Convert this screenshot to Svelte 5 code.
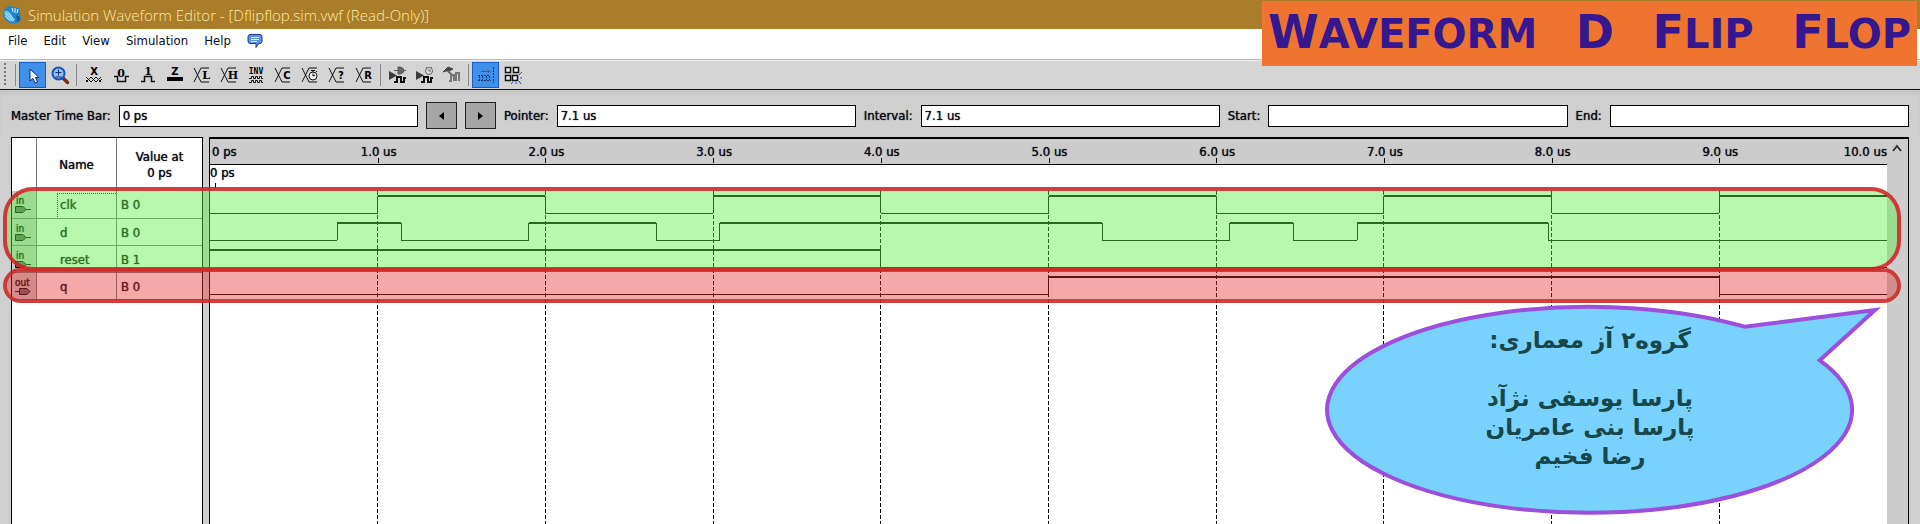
<script>
  const menus = ['File', 'Edit', 'View', 'Simulation', 'Help'];

  const tools = [
    { id: 'pointer', label: 'Selection tool', active: true },
    { id: 'zoom', label: 'Zoom tool' },
    { id: 'sep' },
    { id: 'unknown', label: 'Forcing unknown' },
    { id: 'low', label: 'Forcing low' },
    { id: 'high', label: 'Forcing high' },
    { id: 'highz', label: 'High impedance' },
    { id: 'box', letter: 'L', label: 'Weak low' },
    { id: 'box', letter: 'H', label: 'Weak high' },
    { id: 'invert', label: 'Invert' },
    { id: 'box', letter: 'C', sans: true, label: 'Count value' },
    { id: 'clock', label: 'Overwrite clock' },
    { id: 'box', letter: '?', sans: true, label: 'Arbitrary value' },
    { id: 'box', letter: 'R', sans: true, label: 'Random values' },
    { id: 'sep' },
    { id: 'runfunc', label: 'Run functional simulation' },
    { id: 'runtime', label: 'Run timing simulation' },
    { id: 'testbench', label: 'Generate testbench' },
    { id: 'sep' },
    { id: 'snapgrid', label: 'Snap to grid', active: true },
    { id: 'snaptrans', label: 'Snap to transition' }
  ];

  const signals = [
    { name: 'clk', dir: 'in', value: 'B 0', start: 0, edges: [1, 2, 3, 4, 5, 6, 7, 8, 9] },
    { name: 'd', dir: 'in', value: 'B 0', start: 0, edges: [0.76, 1.14, 1.9, 2.66, 3.04, 5.32, 6.08, 6.46, 6.84, 7.98] },
    { name: 'reset', dir: 'in', value: 'B 1', start: 1, edges: [4] },
    { name: 'q', dir: 'out', value: 'B 0', start: 0, edges: [5, 9] }
  ];

  const ROW = 27;
  const FIRST = 26;
  const span = 10;
  const marks = [1, 2, 3, 4, 5, 6, 7, 8, 9];

  function segments(signal, row) {
    const high = FIRST + row * ROW + 5;
    const low = high + 17;
    const out = [];
    let level = signal.start;
    let from = 0;
    for (const edge of [...signal.edges, span]) {
      const y = level ? high : low;
      out.push({ x1: from, x2: edge, y1: y, y2: y, w: level ? 2 : 1 });
      if (edge < span) out.push({ x1: edge, x2: edge, y1: high, y2: low, w: 1 });
      level = 1 - level;
      from = edge;
    }
    return out;
  }

  const lines = signals.flatMap(segments);
  const pct = (t) => `${(t / span) * 100}%`;
</script>

<div class="window">
  <header class="titlebar">
    <svg width="20" height="20" viewBox="0 0 20 20" aria-hidden="true">
      <path d="M2 7Q4 2 9 1L18 3L20 14L17 18Q11 19 7 17Q2 13 2 7Z" fill="#1f86cc" />
      <path d="M3 7Q6 4 9 8L14 15L12 17Q4 15 3 7Z" fill="#6cc0ea" />
      <path d="M11 3l1 4M14 3v5M17 4l-1 4" stroke="#e4f6fc" fill="none" />
      <path d="M5 8l6 7M8 8l5 7M4 11l5 5" stroke="#b5e2f6" fill="none" />
      <path d="M15 10l4 2v3l-3 2Z" fill="#175a9a" />
    </svg>
    <h1>Simulation Waveform Editor - [Dflipflop.sim.vwf (Read-Only)]</h1>
  </header>

  <nav class="menubar">
    {#each menus as m}
      <button type="button">{m}</button>
    {/each}
    <button type="button" aria-label="Feedback">
      <svg width="16" height="16" viewBox="0 0 16 16">
        <path d="M3 1.500H13Q15 1.500 15 4V8Q15 10.500 13 10.500H12L9 14.500V10.500H3Q1 10.500 1 8V4Q1 1.500 3 1.500Z" fill="#5a92e6" stroke="#1f3f8f" />
        <path d="M4 4.500H12M4 6.500H12M4 8.500H10" stroke="#e4efff" />
      </svg>
    </button>
  </nav>

  <div class="toolbar" role="toolbar" aria-label="Waveform tools">
    <span class="grip"></span>
    <span class="sep"></span>
    {#each tools as t}
      {#if t.id === 'sep'}
        <span class="sep"></span>
      {:else}
        <button type="button" class:active={t.active} aria-label={t.label}>
          <svg width="24" height="24" viewBox="0 0 24 24" fill="none" stroke="#111">
            {#if t.id === 'pointer'}
              <path d="M9 6V18L12 15.500L14 20L16.500 19L14.500 14.500H18Z" fill="#eef4ff" stroke="#16305f" />
            {:else if t.id === 'zoom'}
              <path d="M15 15L19.500 19.500" stroke="#7a2d12" stroke-width="3.500" stroke-linecap="round" />
              <circle cx="10.500" cy="10.500" r="6" fill="#8fc0f5" stroke="#1d55b8" stroke-width="2" />
              <path d="M7.500 9.500H13.500M10.500 6.500V12.500M7.500 14H13.500" stroke="#12306f" />
            {:else if t.id === 'unknown'}
              <text x="12" y="12" class="wide">X</text>
              <path d="M4 19L9 14L14 19L19 14M4 14L9 19L14 14L19 19M6 19L4 17M17 19L20 16" />
            {:else if t.id === 'low'}
              <text x="12" y="14" class="serif">0</text>
              <path d="M5 13.500H8.500V18.500H16.500V13.500H20" stroke-width="1.500" />
            {:else if t.id === 'high'}
              <text x="12" y="12" class="serif">1</text>
              <path d="M5 18.500H8.500V13.500H15.500V18.500H19" stroke-width="1.500" />
            {:else if t.id === 'highz'}
              <text x="12" y="12" class="wide">Z</text>
              <rect x="4" y="14" width="16" height="4" fill="#000" stroke="none" />
            {:else if t.id === 'box'}
              <path d="M4 5L11 19H19M4 19L11 5H19" />
              <text x="16" y="16" class={t.sans ? 'wide' : 'serif'}>{t.letter}</text>
            {:else if t.id === 'invert'}
              <text x="12" y="11" class="mini">INV</text>
              <path d="M5 15.500H7.500V13.500H9.500V15.500H11.500V13.500H13.500V15.500H15.500V13.500H17.500V15.500H19M5 19.500H7.500V17.500H9.500V19.500H11.500V17.500H13.500V19.500H15.500V17.500H17.500V19.500H19" />
            {:else if t.id === 'clock'}
              <path d="M4 5L11 19H19M4 19L11 5H19" />
              <circle cx="15" cy="13" r="4" fill="#eee" />
              <path d="M15 7V9M13 7.500H17M15 13V10.500M15 13L17 12M18 8L19 9" />
            {:else if t.id === 'runfunc'}
              <path d="M3 8L11 12.500L3 17Z" fill="#3a3a3a" stroke="none" />
              <path d="M8 7.500H12M12 4V11H14Q18 10 18 7.500Q18 5 14 4ZM18 7.500H20" fill="#666" stroke="#555" />
              <path d="M8 19H11V14H15V19H18V15H20" stroke-width="2" />
            {:else if t.id === 'runtime'}
              <path d="M3 8L11 12.500L3 17Z" fill="#3a3a3a" stroke="none" />
              <circle cx="16" cy="8" r="3.500" fill="#ddd" stroke="#666" />
              <path d="M13 4L14 5M19 4L18 5M16 8V6M16 8H18" stroke="#666" />
              <path d="M8 19H11V14H15V19H18V15H20" stroke-width="2" />
            {:else if t.id === 'testbench'}
              <path d="M3 9L8 4L13 6L9 8L6 8Z" fill="#444" stroke="#444" />
              <path d="M8 8L13 13" stroke="#666" stroke-width="2" />
              <path d="M9 18H11V12H14V17H16V10H19V18" stroke="#777" stroke-width="2" />
            {:else if t.id === 'snapgrid'}
              <path d="M4 12.500H16M4 17.500H17M5.500 13V17M8.500 13V17M12.500 13V17M15.500 13V17" stroke="#17306e" stroke-dasharray="2 1" />
              <path d="M7 8.500H16M14 6.500L16 8.500L14 10.500" stroke="#8a3b6b" />
              <path d="M19.500 4V20" stroke="#17306e" stroke-dasharray="2 1" />
            {:else}
              <path d="M4.500 4.500H9.500V9.500H4.500ZM12.500 4.500H17.500V9.500H12.500ZM4.500 12.500H9.500V17.500H4.500ZM11.500 12.500H16.500V17.500H11.500Z" fill="#eee" stroke-width="1.500" />
              <path d="M18 12L21 9M19 15H21M18 18L20 21M15 19V21M12 19L10 21" stroke="#2a55a8" />
            {/if}
          </svg>
        </button>
      {/if}
    {/each}
  </div>

  <div class="timebar">
    <label for="master">Master Time Bar:</label>
    <input id="master" value="0 ps" />
    <button type="button" aria-label="Previous transition"><svg width="5" height="8" viewBox="0 0 5 8"><path d="M5 0V8L0 4Z" /></svg></button>
    <button type="button" aria-label="Next transition"><svg width="5" height="8" viewBox="0 0 5 8"><path d="M0 0V8L5 4Z" /></svg></button>
    <label for="ptr">Pointer:</label>
    <input id="ptr" value="7.1 us" />
    <label for="interval">Interval:</label>
    <input id="interval" value="7.1 us" />
    <label for="start">Start:</label>
    <input id="start" value="" />
    <label for="end">End:</label>
    <input id="end" value="" />
  </div>

  <main class="panes">
    <section class="signals">
      <table>
        <thead>
          <tr><th class="dir"></th><th class="name">Name</th><th>Value at<br />0 ps</th></tr>
        </thead>
        <tbody>
          {#each signals as s, i}
            <tr>
              <td class="dir">
                <svg width="20" height="22" viewBox="0 0 20 22">
                  {#if s.dir === 'in'}
                    <text x="2" y="10">in</text>
                    <path d="M1.500 12.500H9L12 15.500L9 18.500H1.500Z" fill="#666" stroke="#000" />
                    <path d="M12 15.500H17" stroke="#000" />
                  {:else}
                    <text x="1" y="10">out</text>
                    <path d="M5.500 12.500H13L16 15.500L13 18.500H5.500Z" fill="#666" stroke="#000" />
                    <path d="M1 15.500H5" stroke="#000" />
                  {/if}
                </svg>
              </td>
              <td class="name"><span class:focus={i === 0}>{s.name}</span></td>
              <td class="value">{s.value}</td>
            </tr>
          {/each}
        </tbody>
      </table>
    </section>

    <section class="waves">
      <div class="chart">
        <div class="ruler">
          <span class="first">0 ps</span>
          {#each marks as m}
            <span class="mark" style:left={pct(m)}>{m}.0 us</span>
          {/each}
          <span class="last">10.0 us</span>
        </div>
        <div class="cursor">0 ps</div>
        <svg class="plot" width="100%" height="100%" shape-rendering="crispEdges" aria-label="Waveforms">
          <line x1="5" x2="5" y1="18" y2="24" stroke="#000" />
          {#each marks as m}
            <line x1={pct(m)} x2={pct(m)} y1="26" y2="100%" stroke="#000" stroke-dasharray="4 2" />
          {/each}
          {#each lines as l}
            <line x1={pct(l.x1)} x2={pct(l.x2)} y1={l.y1} y2={l.y2} stroke="#000" stroke-width={l.w} />
          {/each}
        </svg>
      </div>
      <div class="scroll">
        <button type="button" aria-label="Scroll up"><svg width="10" height="8" viewBox="0 0 10 8"><path d="M1 7L5 2L9 7" fill="none" stroke="#333" stroke-width="2" /></svg></button>
      </div>
    </section>

    <div class="group inputs"></div>
    <div class="group outputs"></div>

    <aside class="bubble">
      <svg width="560" height="216" viewBox="0 0 560 216" aria-hidden="true">
        <path d="M421.700 23.700A262.500 103 0 1 0 496.800 57.300L552 7Z" fill="#78d2fb" stroke="#9b4fdc" stroke-width="4" />
      </svg>
      <p dir="rtl" lang="fa">گروه۲ آز معماری:<br /><br />پارسا یوسفی نژآد<br />پارسا بنی عامریان<br />رضا فخیم</p>
    </aside>
  </main>

  <div class="banner">
    <span><b>W</b>AVEFORM</span>
    <span><b>D</b></span>
    <span><b>F</b>LIP</span>
    <span><b>F</b>LOP</span>
  </div>
</div>

<style>
  :global(body) {
    margin: 0;
  }
  .window {
    position: relative;
    display: flex;
    flex-direction: column;
    min-height: 100vh;
    overflow: hidden;
    background: #cfcfcf;
    color: #0c0c18;
    font: 400 13px/16px "DejaVu Sans Condensed", "DejaVu Sans", sans-serif;
  }
  button {
    margin: 0;
    padding: 0;
    border: 0;
    background: none;
    color: inherit;
    font: inherit;
  }
  .menubar,
  .timebar,
  .timebar input,
  .signals,
  .ruler,
  .cursor {
    text-shadow: 0 0 1px currentColor;
  }
  svg {
    display: block;
  }
  .titlebar {
    display: flex;
    align-items: center;
    gap: 7px;
    height: 29px;
    padding-left: 1px;
    background: #aa7d2b;
  }
  h1 {
    margin: 0;
    color: #ffec9e;
    font: 300 15px/20px "Open Sans", sans-serif;
  }
  .menubar {
    display: flex;
    align-items: flex-start;
    gap: 16px;
    height: 26px;
    padding: 4px 8px 0;
    background: #fff;
    border-bottom: 1px solid #bbb;
  }
  .toolbar {
    display: flex;
    align-items: center;
    height: 28px;
    border-bottom: 1px solid #111;
    border-top: 1px solid #eee;
    background: #d4d4d4;
  }
  .toolbar button {
    display: grid;
    place-items: center;
    width: 27px;
    height: 26px;
  }
  .toolbar .active {
    background: #3e90e8;
    box-shadow: inset 0 0 0 1px #1a5cc0;
  }
  .grip {
    width: 2px;
    height: 24px;
    margin: 0 6px 0 4px;
    background: repeating-linear-gradient(#777 0 2px, transparent 2px 4px);
  }
  .sep {
    width: 1px;
    height: 22px;
    margin: 0 3px;
    background: #888;
  }
  .toolbar text {
    fill: #000;
    stroke: none;
    text-anchor: middle;
  }
  .wide {
    font: bold 10px "DejaVu Sans", sans-serif;
  }
  .serif {
    font: bold 11px "DejaVu Serif", serif;
  }
  .mini {
    font: bold 8px "DejaVu Sans Mono", monospace;
  }
  .timebar {
    display: flex;
    align-items: center;
    gap: 8px;
    height: 47px;
    padding: 4px 11px 0;
    box-sizing: border-box;
    box-shadow: inset 0 4px 4px #c6c6c6;
  }
  .timebar input {
    flex: 1 1 0;
    min-width: 0;
    height: 22px;
    box-sizing: border-box;
    padding: 0 3px;
    border: 1px solid #000;
    background: #fff;
    color: inherit;
    font: inherit;
  }
  .timebar button {
    display: grid;
    place-items: center;
    width: 31px;
    height: 27px;
    border: 1px solid #222;
    background: #a6a6a6;
  }
  .panes {
    position: relative;
    display: flex;
    flex: 1;
    gap: 6px;
    padding: 0 11px;
  }
  .signals {
    flex: none;
    width: 192px;
    box-sizing: border-box;
    border: solid #000;
    border-width: 1px 1px 0;
    background: #fff;
  }
  table {
    width: 100%;
    table-layout: fixed;
    border-collapse: collapse;
  }
  th {
    height: 53px;
    padding: 0;
    font-weight: 400;
    vertical-align: middle;
  }
  td {
    height: 27px;
    box-sizing: border-box;
    padding: 2px 0 0;
    border-bottom: 1px solid #777;
  }
  th,
  td {
    border-right: 1px solid #777;
  }
  th:last-child,
  td:last-child {
    border-right: 0;
  }
  th.dir {
    width: 24px;
  }
  th.name {
    width: 79px;
  }
  td.dir {
    background: #ccc;
  }
  td.dir svg {
    margin-left: 2px;
  }
  td.dir text {
    font: 10px "DejaVu Sans Condensed", sans-serif;
    fill: #000;
  }
  td.name span {
    display: block;
    margin-left: 20px;
    padding: 4px 3px;
  }
  td.name .focus {
    border: dotted #222;
    border-width: 1px 0 0 1px;
    padding: 3px 2px 4px;
  }
  td.value {
    padding-left: 4px;
  }
  .waves {
    display: flex;
    flex: 1;
    min-width: 0;
    border: solid #000;
    border-width: 2px 1px 0 1px;
  }
  .chart {
    display: flex;
    flex: 1;
    flex-direction: column;
    background: #fff;
  }
  .ruler {
    position: relative;
    display: flex;
    justify-content: space-between;
    height: 25px;
    border-bottom: 1px solid #000;
    background: #ccc;
    line-height: 25px;
  }
  .first {
    padding-left: 2px;
  }
  .mark {
    position: absolute;
    width: 60px;
    margin-left: -29px;
    text-align: center;
    white-space: nowrap;
  }
  .mark::after {
    content: "";
    position: absolute;
    left: 29px;
    bottom: 1px;
    width: 1px;
    height: 5px;
    background: #000;
  }
  .cursor {
    height: 0;
  }
  .plot {
    flex: 1;
    min-height: 320px;
  }
  .scroll {
    flex: none;
    width: 21px;
    background: #cdcdcd;
  }
  .scroll button {
    display: grid;
    place-items: center;
    width: 20px;
    height: 18px;
  }
  .group {
    position: absolute;
    left: 3px;
    right: 19px;
    box-sizing: border-box;
    border: 4px solid rgba(204, 42, 40, 0.9);
    background-clip: padding-box;
  }
  .inputs {
    top: 50px;
    height: 84px;
    border-radius: 30px;
    background-color: rgba(90, 238, 66, 0.44);
  }
  .outputs {
    top: 131px;
    height: 35px;
    border-radius: 18px;
    background-color: rgba(228, 50, 50, 0.42);
  }
  .bubble {
    position: absolute;
    right: 37px;
    top: 166px;
  }
  .bubble p {
    position: absolute;
    left: 0;
    top: 23px;
    width: 534px;
    margin: 0;
    color: #15474b;
    font: bold 23px/29px "DejaVu Sans", sans-serif;
    text-align: center;
  }
  .banner {
    position: absolute;
    top: 1px;
    right: 3px;
    display: flex;
    justify-content: space-between;
    gap: 24px;
    height: 65px;
    min-width: 643px;
    padding: 0 6px;
    background: #ee7430;
    color: #35178f;
    font: bold 40px/62px "DejaVu Sans", sans-serif;
    white-space: nowrap;
  }
  .banner b {
    font-size: 46px;
  }
</style>
